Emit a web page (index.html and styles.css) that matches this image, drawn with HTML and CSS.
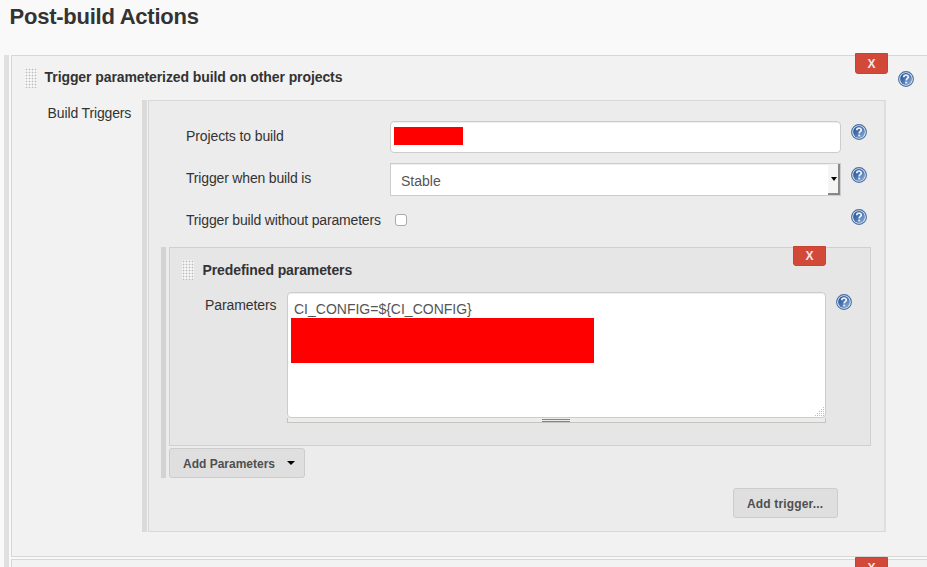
FILE: index.html
```html
<!DOCTYPE html>
<html lang="en">
<head>
<meta charset="utf-8">
<title>Post-build Actions</title>
<link rel="stylesheet" href="styles.css">
</head>
<body>
<svg class="defs" aria-hidden="true">
  <defs>
    <linearGradient id="disc" x1="0" y1="0" x2="1" y2="1">
      <stop offset="0" stop-color="#1e4c8e"/>
      <stop offset=".5" stop-color="#4a76b2"/>
      <stop offset="1" stop-color="#9ab6dc"/>
    </linearGradient>
    <symbol id="help" viewBox="0 0 16 16">
      <circle cx="8" cy="8" r="7.4" fill="#dce7f5" stroke="#496f9f" stroke-width="1.1"/>
      <circle cx="8" cy="8" r="5.9" fill="url(#disc)"/>
      <path d="M5.7 6.3C5.8 3.5 10.4 3.5 10.3 6.1C10.2 7.6 8.2 7.6 8.2 9.4" fill="none" stroke="#e8eff8" stroke-width="1.8"/>
      <rect x="7.2" y="10.6" width="2" height="1.8" fill="#e8eff8"/>
    </symbol>
  </defs>
</svg>
<h1>Post-build Actions</h1>
<main class="group outer">
  <section class="panel trigger">
    <button class="remove">X</button>
    <svg class="help panel-help"><use href="#help"/></svg>
    <header class="title"><i class="grip"></i><b class="t-trigger">Trigger parameterized build on other projects</b></header>
    <div class="build">
      <span class="label build-label"><span>Build Triggers</span></span>
      <div class="group middle">
        <div class="panel settings">
          <div class="row"><span class="label name"><span class="t-projects">Projects to build</span></span><div class="input"><i class="redacted"></i></div><svg class="help"><use href="#help"/></svg></div>
          <div class="row"><span class="label name"><span class="t-when">Trigger when build is</span></span><div class="select"><span>Stable</span><i class="drop"><svg viewBox="0 0 6 4"><path d="M0 0H6L3 4Z"/></svg></i></div><svg class="help"><use href="#help"/></svg></div>
          <div class="row check-row"><span class="label name"><span class="t-without">Trigger build without parameters</span></span><i class="checkbox"></i><svg class="help"><use href="#help"/></svg></div>
          <div class="group inner">
            <div class="panel predefined">
              <button class="remove">X</button>
              <header class="title"><i class="grip"></i><b class="t-pre">Predefined parameters</b></header>
              <div class="params">
                <span class="label param-label"><span class="t-param">Parameters</span></span>
                <div class="editor">
                  <div class="textarea"><span class="t-code">CI_CONFIG=${CI_CONFIG}</span><i class="redacted block"></i>
                    <svg class="corner" viewBox="0 0 10 10"><path d="M8 .5h1M8 2.5h1M6 2.5h1M8 4.5h1M6 4.5h1M4 4.5h1M8 6.5h1M6 6.5h1M4 6.5h1M2 6.5h1M8 8.5h1M6 8.5h1M4 8.5h1M2 8.5h1M0 8.5h1"/></svg></div>
                  <div class="resize"><i></i></div>
                </div>
                <svg class="help"><use href="#help"/></svg>
              </div>
            </div>
            <button class="btn add-param"><span>Add Parameters</span><svg viewBox="0 0 8 4"><path d="M0 0H8L4 4Z"/></svg></button>
          </div>
          <div class="actions"><button class="btn add-trigger"><span>Add trigger...</span></button></div>
        </div>
      </div>
    </div>
  </section>
  <section class="panel next"><button class="remove">X</button></section>
</main>
</body>
</html>
```
FILE: styles.css
```css
* { box-sizing: border-box; }
body {
  margin: 0;
  height: 567px;
  overflow: hidden;
  background: #f9f9f9;
  color: #333;
  font: 14px/20px "Liberation Sans", Arial, sans-serif;
}
i { display: block; }
button { font-family: inherit; }
.defs { position: absolute; width: 0; height: 0; }
h1 {
  margin: 0;
  height: 55px;
  padding: 4px 0 0 9.5px;
  font-size: 22px;
  line-height: 26px;
  letter-spacing: -.24px;
  white-space: nowrap;
}
.group { border-left: 5px solid #dadada; padding-left: 2px; }
.outer { margin-left: 4px; border-color: #e0e0e0; height: 512px; overflow: hidden; margin-top: -3px; padding-top: 3px; height: 515px; border-image: linear-gradient(transparent 3px, #e0e0e0 3px) 0 0 0 5; }
.panel { position: relative; border: 1px solid #d7d7d7; }
.trigger { height: 502px; background: #f2f2f2; border-right: 0; }
.next { height: 40px; margin-top: 2px; background: #f2f2f2; border-right: 0; }
.remove {
  position: absolute;
  top: -3px;
  right: 39px;
  width: 33px;
  height: 21px;
  padding: 0;
  border: 1px solid #c74435;
  border-radius: 0 0 3px 3px;
  background: #d24939;
  color: #f5e6e3;
  font-size: 12px;
  font-weight: bold;
  line-height: 18px;
}
.predefined .remove { top: -2px; right: 44px; height: 20px; }
.help { display: block; width: 16px; height: 16px; flex: none; }
.panel-help { position: absolute; right: 13px; top: 15px; }
.title { display: flex; align-items: center; height: 44px; padding-left: 13px; white-space: nowrap; }
.grip {
  width: 12px;
  height: 20px;
  margin-right: 7.6px;
  background: radial-gradient(circle at 1.5px 1.5px, #bdbdbd .6px, transparent 1.2px) 0 0 / 3px 3px #f7f7f7;
}
.t-trigger { margin-top: -2px; letter-spacing: -.09px; }
.t-pre { letter-spacing: -.1px; }
.t-projects { letter-spacing: -.11px; }
.t-when { letter-spacing: -.17px; }
.t-without { letter-spacing: -.17px; }
.t-param { letter-spacing: -.1px; }
.build-label span { letter-spacing: -.14px; }
.label { display: block; white-space: nowrap; flex: none; }
.build { display: flex; }
.build-label { width: 130px; padding: 3px 0 0 35.6px; }
.middle { width: 744px; padding-left: 1px; }
.settings { height: 432px; padding: 20px 0 0 12px; background: #ececec; border-right: 2px solid #dfdfdf; }
.row { display: flex; height: 42px; padding-left: 25px; }
.name { width: 204px; padding-top: 5px; }
.row .help { margin: 3px 0 0 10px; }
.row:nth-child(2) .help { margin-top: 3.5px; }
.input {
  width: 451px;
  height: 32px;
  padding: 6px 3px;
  border: 1px solid #ccc;
  border-radius: 4px;
  background: #fff;
  box-shadow: inset 0 1px 1px #eee;
}
.redacted { width: 69px; height: 18px; background: #f00; }
.input .redacted { margin-top: -1px; }
.select {
  display: flex;
  justify-content: space-between;
  width: 451px;
  height: 33px;
  border: 1px solid #ccc;
  background: #fff;
  padding-left: 10px;
  box-shadow: inset 0 1px 1px #eee;
}
.select span { padding-top: 7px; color: #555; }
.drop { width: 12px; border-right: 2px solid #888; border-bottom: 2px solid #888; background: #f5f5f3; padding: 13px 0 0 3px; }
.drop svg { display: block; width: 6px; height: 4px; }
.check-row { position: relative; height: 42px; }
.checkbox { width: 12px; height: 12px; margin: 9px 0 0 5px; border: 1px solid #aaa; border-radius: 3px; background: #fff; }
.row.check-row .help { margin: 3.5px 0 0 444px; }
.inner { width: 710px; height: 231px; padding-left: 3px; border-color: #d3d3d3; }
.predefined { width: 702px; height: 199px; background: #e6e6e6; border-color: #d0d0d0; }
.predefined .title { padding-left: 12px; }
.predefined .grip { margin-right: 8.5px; background-color: #f5f5f5; }
.params { display: flex; }
.param-label { width: 117px; padding: 3px 0 0 35px; }
.editor { width: 539px; }
.textarea {
  position: relative;
  height: 126px;
  padding: 6px 3px;
  border: 1px solid #ccc;
  border-radius: 4px;
  background: #fff;
  color: #555;
  box-shadow: inset 0 1px 1px #eee;
}
.textarea span { display: block; height: 19px; padding-left: 3px; }
.redacted.block { width: 303px; height: 45px; }
.corner { position: absolute; right: 0; bottom: 0; width: 10px; height: 10px; stroke: #bbb; }
.resize { height: 5px; padding: 1px 0 0 254px; border: 1px solid #c5c5bf; border-top: 0; background: #ececec; }
.resize i { width: 28px; height: 3px; border-top: 1px solid #858585; border-bottom: 1px solid #858585; }
.params .help { margin: 2px 0 0 10px; }
.btn {
  display: flex;
  align-items: center;
  height: 30px;
  padding: 1px 0 0 13px;
  border: 1px solid #ccc;
  border-radius: 3px;
  background: #dfdfdf;
  color: #4f4f4f;
  font-size: 12px;
  font-weight: bold;
  white-space: nowrap;
}
.add-param { width: 136px; margin-top: 2px; }
.add-param span { width: 104px; text-align: left; }
.add-param svg { width: 8px; height: 4px; margin-top: -2px; }
.actions { display: flex; justify-content: flex-end; padding: 10px 46px 0 0; }
.add-trigger { width: 105px; letter-spacing: .16px; }
```
